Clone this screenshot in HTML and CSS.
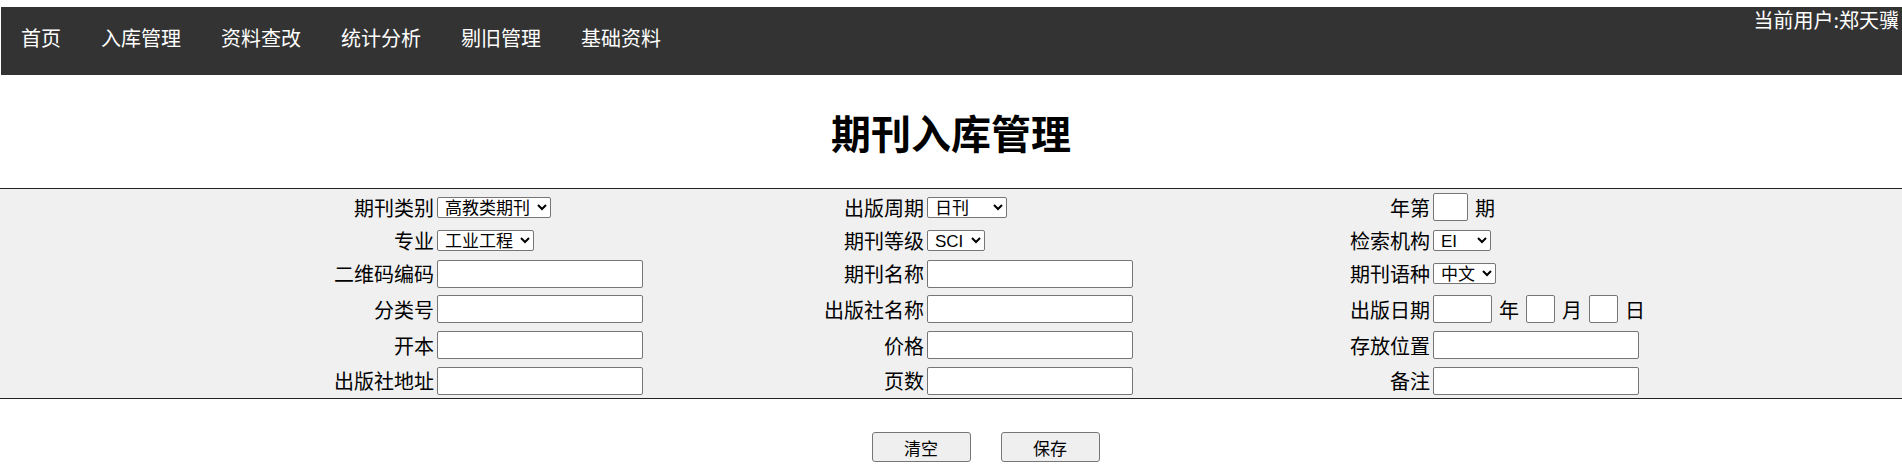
FILE: index.html
```html
<!DOCTYPE html>
<html lang="zh-CN">
<head>
  <meta charset="UTF-8">
  <meta name="viewport" content="width=device-width, initial-scale=1.0">
  <title>期刊入库管理</title>
  <link rel="stylesheet" href="styles.css">
</head>
<body>
  <header class="topbar">
    <ul class="nav">
      <li><a href="#">首页</a></li>
      <li><a href="#">入库管理</a></li>
      <li><a href="#">资料查改</a></li>
      <li><a href="#">统计分析</a></li>
      <li><a href="#">剔旧管理</a></li>
      <li><a href="#">基础资料</a></li>
    </ul>
    <div class="user">当前用户:郑天骥</div>
  </header>

  <h1 class="title">期刊入库管理</h1>

  <form class="entry-form" id="entry-form">
    <div class="fields">
      <!-- row 1 -->
      <label class="cell-label" for="category">期刊类别</label>
      <div class="cell-field">
        <select id="category" name="category">
          <option>高教类期刊</option>
          <option>科技类期刊</option>
          <option>综合类期刊</option>
        </select>
      </div>
      <label class="cell-label" for="cycle">出版周期</label>
      <div class="cell-field">
        <select id="cycle" name="cycle">
          <option>日刊</option>
          <option>周刊</option>
          <option>半月刊</option>
          <option>月刊</option>
          <option>双月刊</option>
          <option>季刊</option>
        </select>
      </div>
      <label class="cell-label" for="issue">年第</label>
      <div class="cell-field">
        <input type="text" id="issue" name="issue" class="input-issue">
        <span>期</span>
      </div>

      <!-- row 2 -->
      <label class="cell-label" for="major">专业</label>
      <div class="cell-field">
        <select id="major" name="major">
          <option>工业工程</option>
          <option>机械工程</option>
          <option>电气工程</option>
        </select>
      </div>
      <label class="cell-label" for="level">期刊等级</label>
      <div class="cell-field">
        <select id="level" name="level">
          <option>SCI</option>
          <option>EI</option>
        </select>
      </div>
      <label class="cell-label" for="index">检索机构</label>
      <div class="cell-field">
        <select id="index" name="index">
          <option>EI</option>
          <option>SCI</option>
        </select>
      </div>

      <!-- row 3 -->
      <label class="cell-label" for="qrcode">二维码编码</label>
      <div class="cell-field"><input type="text" id="qrcode" name="qrcode"></div>
      <label class="cell-label" for="name">期刊名称</label>
      <div class="cell-field"><input type="text" id="name" name="name"></div>
      <label class="cell-label" for="language">期刊语种</label>
      <div class="cell-field">
        <select id="language" name="language">
          <option>中文</option>
          <option>英文</option>
        </select>
      </div>

      <!-- row 4 -->
      <label class="cell-label" for="classno">分类号</label>
      <div class="cell-field"><input type="text" id="classno" name="classno"></div>
      <label class="cell-label" for="publisher">出版社名称</label>
      <div class="cell-field"><input type="text" id="publisher" name="publisher"></div>
      <label class="cell-label" for="pub-year">出版日期</label>
      <div class="cell-field">
        <input type="text" id="pub-year" name="pub-year" class="input-year">
        <span>年</span>
        <input type="text" id="pub-month" name="pub-month" class="input-day">
        <span>月</span>
        <input type="text" id="pub-day" name="pub-day" class="input-day">
        <span>日</span>
      </div>

      <!-- row 5 -->
      <label class="cell-label" for="format">开本</label>
      <div class="cell-field"><input type="text" id="format" name="format"></div>
      <label class="cell-label" for="price">价格</label>
      <div class="cell-field"><input type="text" id="price" name="price"></div>
      <label class="cell-label" for="location">存放位置</label>
      <div class="cell-field"><input type="text" id="location" name="location"></div>

      <!-- row 6 -->
      <label class="cell-label" for="address">出版社地址</label>
      <div class="cell-field"><input type="text" id="address" name="address"></div>
      <label class="cell-label" for="pages">页数</label>
      <div class="cell-field"><input type="text" id="pages" name="pages"></div>
      <label class="cell-label" for="remark">备注</label>
      <div class="cell-field"><input type="text" id="remark" name="remark"></div>
    </div>

    <div class="actions">
      <button type="reset">清空</button>
      <button type="submit">保存</button>
    </div>
  </form>
</body>
</html>
```

FILE: styles.css
```css
html, body {
  overflow: hidden;
}

body {
  margin: 0;
  padding: 0;
  font-family: "Noto Sans CJK SC", sans-serif;
  font-size: 20px;
  color: #000;
  background-color: #fff;
}

/* top navigation bar */
.topbar {
  display: flex;
  align-items: flex-start;
  height: 68px;
  margin: 7px 0 0 1px;
  background-color: #333;
}

.nav {
  display: flex;
  margin: 0;
  padding: 0;
  list-style: none;
}

.nav a {
  display: block;
  padding: 0 20px 6px;
  line-height: 62px;
  color: #fff;
  text-decoration: none;
}

.user {
  margin-left: auto;
  margin-right: 3px;
  line-height: 26px;
  color: #fff;
  white-space: nowrap;
}

.title {
  margin: 32px 0 31px;
  font-size: 40px;
  line-height: 50px;
  font-weight: bold;
  text-align: center;
}

/* form grid */
.fields {
  display: grid;
  grid-template-columns: 436px 239px 251px 254px 252px 1fr;
  grid-template-rows: 36px 31px 35px 36px 36px 35px;
  border-top: 1px solid #222;
  border-bottom: 1px solid #222;
  background-color: #f0f0f0;
}

.cell-label {
  display: flex;
  align-items: center;
  justify-content: flex-end;
  padding-right: 2px;
  white-space: nowrap;
}

.cell-field {
  display: flex;
  align-items: center;
  gap: 7px;
  padding-left: 1px;
}

input, select, button {
  font-family: "Liberation Sans", "Noto Sans CJK SC", sans-serif;
  font-size: 17px;
  color: #000;
}

input {
  box-sizing: border-box;
  width: 206px;
  height: 28px;
  margin: 0;
  padding: 1px 3px;
  border: 1px solid #767676;
  border-radius: 2px;
  background-color: #fff;
}

.input-issue {
  width: 35px;
}

.input-year {
  width: 59px;
}

.input-day {
  width: 29px;
}

select {
  box-sizing: border-box;
  height: 21px;
  margin: 0;
  padding: 0 4px 0 3px;
  line-height: 19px;
  border: 1px solid #767676;
  border-radius: 2px;
  background-color: #fff;
}

.actions {
  display: flex;
  justify-content: center;
  gap: 30px;
  margin-top: 33px;
  padding-left: 69px;
}

button {
  box-sizing: border-box;
  width: 99px;
  height: 30px;
  padding: 0;
  border: 1px solid #767676;
  border-radius: 3px;
  background-color: #efefef;
  cursor: pointer;
}

button:hover {
  background-color: #e5e5e5;
}
```
